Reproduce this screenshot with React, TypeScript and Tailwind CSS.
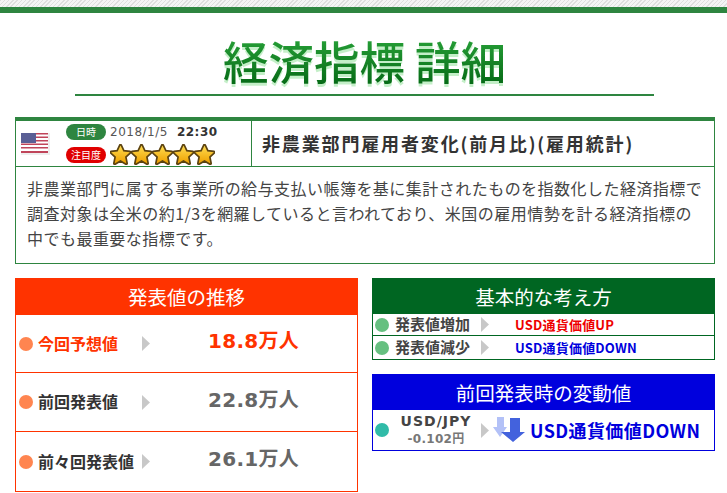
const font = { fontFamily: '"Noto Sans CJK JP", "Noto Sans", sans-serif' }
const latin = { fontFamily: '"DejaVu Sans", "Noto Sans CJK JP", sans-serif' }

function Star() {
  return (
    <svg width="21" height="21" viewBox="1.5 1.5 21 21">
      <defs>
        <linearGradient id="starFill" x1="0" y1="0" x2="0" y2="1">
          <stop offset="0" stopColor="#ffdc50" />
          <stop offset="1" stopColor="#eda000" />
        </linearGradient>
      </defs>
      <path
        d="M12 3l2.8 6 6.6.8-4.9 4.5 1.3 6.6-5.8-3.3-5.8 3.3 1.3-6.6-4.9-4.5 6.6-.8z"
        fill="url(#starFill)"
        stroke="#5c4310"
        strokeWidth="3.4"
        strokeLinejoin="round"
        paintOrder="stroke"
      />
    </svg>
  )
}

function Flag() {
  return (
    <svg width="29" height="22" viewBox="0 0 29 22">
      <rect width="29" height="22" fill="#eeeeee" />
      <rect width="27" height="20" fill="#ffffff" />
      <rect y="0" width="27" height="1.5" fill="#c0455a" />
      <rect y="3.5" width="27" height="1.5" fill="#c0455a" />
      <rect y="7" width="27" height="1.5" fill="#c0455a" />
      <rect y="10.5" width="27" height="1.5" fill="#c0455a" />
      <rect y="14" width="27" height="1.5" fill="#c0455a" />
      <rect y="18" width="27" height="2" fill="#c0455a" />
      <rect width="15" height="10" fill="#5a5f95" />
    </svg>
  )
}

function Arrow() {
  return (
    <svg width="8" height="15" viewBox="0 0 8 15" className="shrink-0">
      <path d="M0 0l8 7.5-8 7.5z" fill="#c8c8c8" />
    </svg>
  )
}

function Dot({ color }: { color: string }) {
  return <span className={`w-[14px] h-[14px] rounded-full shrink-0 ${color}`}></span>
}

function DownArrows() {
  return (
    <svg width="32" height="26" viewBox="0 0 32 26" className="shrink-0">
      <path d="M4 0h7v10h3l-7 10-7-10h4z" fill="#b3c1f7" />
      <path d="M17 1h10v14h5L20 25 8 15h9z" fill="#4362dd" />
    </svg>
  )
}

const history = [
  { label: '今回予想値', value: '18.8万人', labelColor: 'text-[#ff3300]', valueColor: 'text-[#ff3300]' },
  { label: '前回発表値', value: '22.8万人', labelColor: 'text-[#333333]', valueColor: 'text-[#666666]' },
  { label: '前々回発表値', value: '26.1万人', labelColor: 'text-[#333333]', valueColor: 'text-[#666666]' },
]

export default function App() {
  return (
    <div style={font} className="w-[727px] h-[493px] overflow-hidden bg-white text-[#333333]">
      {/* ヘッダー */}
      <div className="h-[7px] bg-[repeating-linear-gradient(135deg,#dedede_0,#dedede_1px,#f4f4f4_1px,#f4f4f4_3px)]"></div>
      <div className="h-[6px] bg-[#2e8540]"></div>

      <div className="mx-[75px] w-[579px] h-[83px] border-b-2 border-[#2e8540] flex justify-center">
        <h1 className="mt-[18px] text-[45.5px] leading-[58px] font-medium whitespace-nowrap bg-gradient-to-b from-[#2aa83c] to-[#00600f] bg-clip-text text-transparent drop-shadow-[0_3px_0_#c4efc8]">
          経済指標 詳細
        </h1>
      </div>

      {/* 指標カード */}
      <div className="mt-[21px] mx-[15px] w-[700px] h-[147px] border border-[#2e8540] border-t-[4px]">
        <div className="h-[46px] flex border-b border-[#2e8540]">
          <div className="w-[236px] border-r border-[#2e8540] flex items-center pl-[5px]">
            <Flag />
            <div className="ml-[16px] flex flex-col gap-[3px]">
              <div className="flex items-center h-[20px]">
                <span className="w-[40px] h-[16px] rounded-full bg-[#2e8540] text-white text-[10px] leading-[16px] text-center">日時</span>
                <span className="ml-[4px] text-[12px] text-[#555555] tracking-[0.5px]" style={latin}>2018/1/5</span>
                <span className="ml-[9px] text-[12px] font-bold text-[#333333] tracking-[0.5px]" style={latin}>22:30</span>
              </div>
              <div className="flex items-center h-[20px]">
                <span className="w-[40px] h-[16px] rounded-full bg-[#e00000] text-white text-[10px] leading-[16px] text-center">注目度</span>
                <span className="ml-[4px] -mt-[2px] flex">
                  <Star /><Star /><Star /><Star /><Star />
                </span>
              </div>
            </div>
          </div>
          <div className="flex-1 flex items-center pl-[10px] text-[18px] font-bold tracking-[1.85px] text-[#333333] whitespace-nowrap">
            非農業部門雇用者変化(前月比)(雇用統計)
          </div>
        </div>
        <p className="pl-[11px] pt-[9px] text-[16px] leading-[25px] tracking-[0.47px] text-[#444444] whitespace-nowrap">
          非農業部門に属する事業所の給与支払い帳簿を基に集計されたものを指数化した経済指標で
          <br />
          調査対象は全米の約1/3を網羅していると言われており、米国の雇用情勢を計る経済指標の
          <br />
          中でも最重要な指標です。
        </p>
      </div>

      <div className="mt-[14px] ml-[15px] flex items-start">
        {/* 発表値の推移 */}
        <div className="w-[343px]">
          <div className="h-[37px] bg-[#ff3300] text-white text-center text-[19.5px] leading-[37px]">発表値の推移</div>
          <div className="border border-t-0 border-[#ff3300] divide-y divide-[#ff3300]">
            {history.map((row) => (
              <div key={row.label} className="h-[59px] first:h-[58px] flex items-center pl-[3px]">
                <Dot color="bg-[#ff8550]" />
                <span className={`ml-[5px] -mt-[2px] w-[104px] text-[16px] font-bold whitespace-nowrap ${row.labelColor}`}>{row.label}</span>
                <Arrow />
                <span className={`ml-[58px] -mt-[5px] text-[20px] font-bold tracking-[0.3px] whitespace-nowrap ${row.valueColor}`} style={latin}>{row.value}</span>
              </div>
            ))}
          </div>
        </div>

        <div className="ml-[14px] w-[343px]">
          {/* 基本的な考え方 */}
          <div className="h-[36px] bg-[#006622] text-white text-center text-[19.5px] leading-[37px]">基本的な考え方</div>
          <div className="border border-t-0 border-[#006622] divide-y divide-[#006622]">
            <div className="h-[22px] flex items-center pl-[2px]">
              <Dot color="bg-[#66c080]" />
              <span className="ml-[6px] w-[86px] text-[15px] font-bold text-[#444444] whitespace-nowrap">発表値増加</span>
              <Arrow />
              <span className="ml-[26px] text-[13px] font-bold tracking-[0.2px] text-[#ee0000] whitespace-nowrap">USD通貨価値UP</span>
            </div>
            <div className="h-[23px] flex items-center pl-[2px]">
              <Dot color="bg-[#66c080]" />
              <span className="ml-[6px] w-[86px] text-[15px] font-bold text-[#444444] whitespace-nowrap">発表値減少</span>
              <Arrow />
              <span className="ml-[26px] text-[13px] font-bold tracking-[0.2px] text-[#0000dd] whitespace-nowrap">USD通貨価値DOWN</span>
            </div>
          </div>

          {/* 前回発表時の変動値 */}
          <div className="mt-[14px] h-[36px] bg-[#0000dd] text-white text-center text-[19.5px] leading-[37px]">前回発表時の変動値</div>
          <div className="h-[41px] border border-t-0 border-[#0000dd] flex items-center pl-[2px]">
            <Dot color="bg-[#30bba8]" />
            <div className="ml-[2px] w-[90px] flex flex-col items-center" style={latin}>
              <span className="text-[14px] leading-[19px] font-bold text-[#444444] tracking-[1px]">USD/JPY</span>
              <span className="text-[12px] leading-[17px] font-bold text-[#777777] tracking-[0.3px]">-0.102円</span>
            </div>
            <Arrow />
            <span className="ml-[4px]"><DownArrows /></span>
            <span className="ml-[5px] text-[18px] font-bold text-[#0000dd] tracking-[0.4px] whitespace-nowrap">USD通貨価値DOWN</span>
          </div>
        </div>
      </div>
    </div>
  )
}
